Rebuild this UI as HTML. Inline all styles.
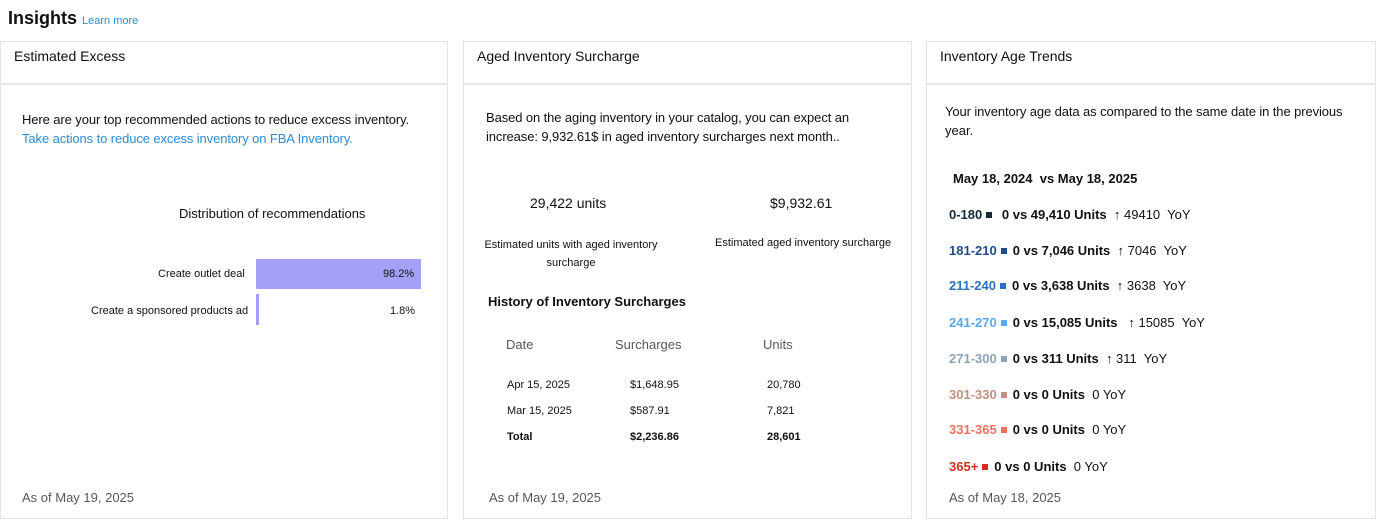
<!DOCTYPE html>
<html><head><meta charset="utf-8"><style>
*{margin:0;padding:0;box-sizing:border-box}
body{width:1379px;height:524px;background:#fff;font-family:"Liberation Sans",Arial,sans-serif;color:#0f1111;position:relative;overflow:hidden}
.a{position:absolute;white-space:nowrap}
.card{position:absolute;top:41px;height:478px;border:1px solid #e3e3e3;background:#fff}
.hd{position:absolute;left:0;right:0;top:0;height:43px;border-bottom:2px solid #e6e6e6}
.hd span{position:absolute;left:13px;top:6px;font-size:14px;color:#0f1111}
.gray{color:#565959}
.b{font-weight:bold}
.sq{display:inline-block;width:6px;height:6px;margin:0 6px 1px 4px;vertical-align:middle}
</style></head><body>
<div class="a b" style="left:8px;top:8px;font-size:18px">Insights</div>
<div class="a" style="left:82px;top:15px;font-size:11px;color:#2a8dd4">Learn more</div>

<div class="card" style="left:0;width:448px"><div class="hd"><span>Estimated Excess</span></div></div>
<div class="card" style="left:463px;width:449px"><div class="hd"><span>Aged Inventory Surcharge</span></div></div>
<div class="card" style="left:926px;width:450px"><div class="hd"><span>Inventory Age Trends</span></div></div>

<!-- card1 -->
<div class="a" style="left:22px;top:112px;font-size:13px;letter-spacing:-0.1px">Here are your top recommended actions to reduce excess inventory.</div>
<div class="a" style="left:22px;top:131px;font-size:13px;color:#2a8dd4;letter-spacing:-0.1px">Take actions to reduce excess inventory on FBA Inventory.</div>
<div class="a" style="left:179px;top:206px;font-size:13px">Distribution of recommendations</div>
<div class="a" style="left:256px;top:259px;width:165px;height:30px;background:#a3a0f5"></div>
<div class="a" style="left:256px;top:294px;width:3px;height:31px;background:#a3a0f5"></div>
<div class="a" style="left:158px;top:268px;font-size:11px">Create outlet deal</div>
<div class="a" style="left:383px;top:268px;font-size:11px">98.2%</div>
<div class="a" style="left:91px;top:305px;font-size:11px">Create a sponsored products ad</div>
<div class="a" style="left:390px;top:305px;font-size:11px">1.8%</div>
<div class="a gray" style="left:22px;top:490px;font-size:13px">As of May 19, 2025</div>

<!-- card2 -->
<div class="a" style="left:486px;top:110px;font-size:13px;letter-spacing:-0.1px">Based on the aging inventory in your catalog, you can expect an</div>
<div class="a" style="left:486px;top:129px;font-size:13px;letter-spacing:-0.1px">increase: 9,932.61$ in aged inventory surcharges next month..</div>
<div class="a" style="left:530px;top:195px;font-size:14px">29,422 units</div>
<div class="a" style="left:770px;top:195px;font-size:14px">$9,932.61</div>
<div class="a" style="left:482px;top:236px;font-size:11px;text-align:center;width:178px;white-space:normal;line-height:18px">Estimated units with aged inventory surcharge</div>
<div class="a" style="left:715px;top:237px;font-size:11px">Estimated aged inventory surcharge</div>
<div class="a b" style="left:488px;top:294px;font-size:13px">History of Inventory Surcharges</div>
<div class="a gray" style="left:506px;top:337px;font-size:13px">Date</div>
<div class="a gray" style="left:615px;top:337px;font-size:13px">Surcharges</div>
<div class="a gray" style="left:763px;top:337px;font-size:13px">Units</div>
<div class="a" style="left:507px;top:379px;font-size:11px">Apr 15, 2025</div>
<div class="a" style="left:630px;top:379px;font-size:11px">$1,648.95</div>
<div class="a" style="left:767px;top:379px;font-size:11px">20,780</div>
<div class="a" style="left:507px;top:405px;font-size:11px">Mar 15, 2025</div>
<div class="a" style="left:630px;top:405px;font-size:11px">$587.91</div>
<div class="a" style="left:767px;top:405px;font-size:11px">7,821</div>
<div class="a b" style="left:507px;top:431px;font-size:11px">Total</div>
<div class="a b" style="left:630px;top:431px;font-size:11px">$2,236.86</div>
<div class="a b" style="left:767px;top:431px;font-size:11px">28,601</div>
<div class="a gray" style="left:489px;top:490px;font-size:13px">As of May 19, 2025</div>

<!-- card3 -->
<div class="a" style="left:945px;top:104px;font-size:13px;letter-spacing:-0.1px">Your inventory age data as compared to the same date in the previous</div>
<div class="a" style="left:945px;top:123px;font-size:13px">year.</div>
<div class="a b" style="left:953px;top:171px;font-size:13px">May 18, 2024&nbsp; vs May 18, 2025</div>
<div class="a" style="left:949px;top:207px;font-size:13px"><b style="color:#0d2a35">0-180</b><span class="sq" style="background:#0d2a35"></span> <b>0 vs 49,410 Units</b> &nbsp;↑ 49410&nbsp; YoY</div>
<div class="a" style="left:949px;top:243px;font-size:13px"><b style="color:#1f4b8a">181-210</b><span class="sq" style="background:#1f4b8a"></span><b>0 vs 7,046 Units</b> &nbsp;↑ 7046&nbsp; YoY</div>
<div class="a" style="left:949px;top:278px;font-size:13px"><b style="color:#2a6fc0">211-240</b><span class="sq" style="background:#2a6fc0"></span><b>0 vs 3,638 Units</b> &nbsp;↑ 3638&nbsp; YoY</div>
<div class="a" style="left:949px;top:315px;font-size:13px"><b style="color:#5aa8f0">241-270</b><span class="sq" style="background:#5aa8f0"></span><b>0 vs 15,085 Units</b> &nbsp;&nbsp;↑ 15085&nbsp; YoY</div>
<div class="a" style="left:949px;top:351px;font-size:13px"><b style="color:#8aa4b8">271-300</b><span class="sq" style="background:#8aa4b8"></span><b>0 vs 311 Units</b> &nbsp;↑ 311&nbsp; YoY</div>
<div class="a" style="left:949px;top:387px;font-size:13px"><b style="color:#c09080">301-330</b><span class="sq" style="background:#c09080"></span><b>0 vs 0 Units</b>&nbsp; 0 YoY</div>
<div class="a" style="left:949px;top:422px;font-size:13px"><b style="color:#f07060">331-365</b><span class="sq" style="background:#f07060"></span><b>0 vs 0 Units</b>&nbsp; 0 YoY</div>
<div class="a" style="left:949px;top:459px;font-size:13px"><b style="color:#d0301a">365+</b><span class="sq" style="background:#d0301a"></span><b>0 vs 0 Units</b>&nbsp; 0 YoY</div>
<div class="a gray" style="left:949px;top:490px;font-size:13px">As of May 18, 2025</div>
</body></html>
